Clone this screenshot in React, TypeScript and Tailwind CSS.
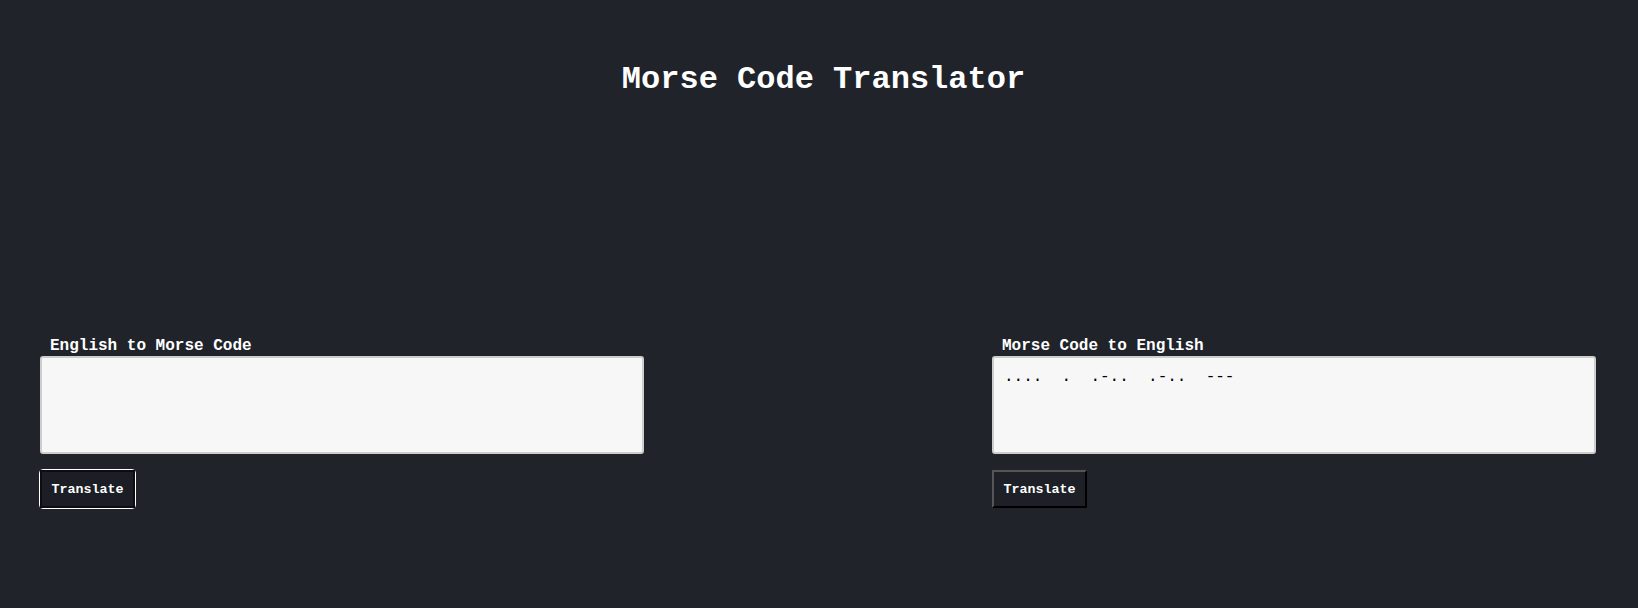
import React from "react";

const mono = { fontFamily: '"Liberation Mono", "Courier New", monospace' };

function Panel({
  label,
  value,
  focused,
}: {
  label: string;
  value: string;
  focused?: boolean;
}) {
  return (
    <div className="flex w-[604px] flex-col items-start">
      <label className="block pl-[10px] text-[16px] font-bold leading-[19px] text-white">
        {label}
      </label>
      <textarea
        readOnly
        value={value}
        style={mono}
        className="box-border block h-[98px] w-full resize-none rounded-[3px] border-2 border-[#cdcdcd] bg-[#f7f7f7] p-[10px] text-[16px] leading-[18px] text-black outline-none"
      />
      {focused ? (
        <div className="ml-[-1px] mt-[15px] inline-flex rounded-[4px] border border-white">
          <button
            style={mono}
            className="box-border flex h-[38px] w-[95px] items-center justify-center border-2 border-[#0b0d10] bg-[#1b1e24] text-[13.33px] font-bold leading-[15px] text-white"
          >
            Translate
          </button>
        </div>
      ) : (
        <button
          style={mono}
          className="mt-[16px] box-border flex h-[38px] w-[95px] items-center justify-center border-2 border-t-[#555555] border-l-[#555555] border-r-black border-b-black bg-[#1d2026] text-[13.33px] font-bold leading-[15px] text-white"
        >
          Translate
        </button>
      )}
    </div>
  );
}

export default function App() {
  return (
    <div style={mono} className="min-h-[608px] w-full bg-[#20232a] text-white">
      <h1 className="pl-[9px] pt-[62px] text-center text-[32px] font-bold leading-[36px] text-white">
        Morse Code Translator
      </h1>
      <div className="mt-[239px] flex justify-between pl-[40px] pr-[42px]">
        <Panel label="English to Morse Code" value="" focused />
        <Panel label="Morse Code to English" value="....  .  .-..  .-..  ---" />
      </div>
    </div>
  );
}
